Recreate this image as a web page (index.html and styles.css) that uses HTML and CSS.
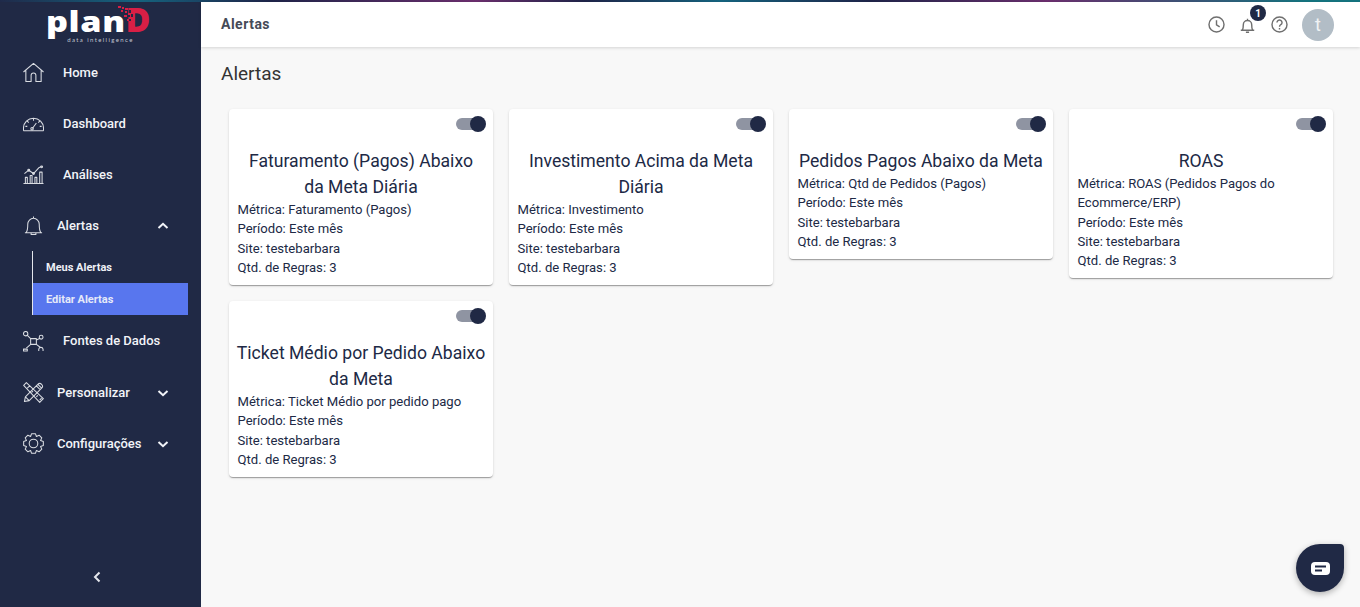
FILE: index.html
```html
<!DOCTYPE html>
<html lang="pt-BR">
<head>
<meta charset="utf-8">
<title>Alertas</title>
<link rel="stylesheet" href="styles.css">
</head>
<body>
<div class="topline"></div>
<div class="app">
  <aside class="sidebar">
    <div class="logo">
      <div class="logo-word"><span class="plan">plan</span><span class="d">D</span>
        <svg class="logo-bits" width="24" height="18" viewBox="0 0 24 18"><g fill="#d81f45"><rect x="0" y="0" width="3" height="2"/><rect x="4" y="1" width="2" height="2"/><rect x="7" y="2" width="3" height="2"/><rect x="3" y="4" width="2" height="2"/><rect x="7" y="5" width="2" height="2"/></g><g fill="#202945"><rect x="11" y="4" width="2" height="3"/><rect x="9" y="9" width="3" height="2"/><rect x="13" y="8" width="2" height="3"/><rect x="11" y="13" width="2" height="2"/></g><g fill="#d81f45"><rect x="10" y="7" width="3" height="2"/><rect x="6" y="9" width="3" height="2"/><rect x="11" y="11" width="2" height="2"/><rect x="9" y="13" width="2" height="2"/></g></svg>
      </div>
      <div class="logo-sub">data intelligence</div>
    </div>
    <nav class="nav">
      <a class="item"><svg class="ico" viewBox="0 0 22 22"><path d="M.5 10.500 11 1.500l10.500 9M3 9v11.500h5.500V14q0-2.500 2.500-2.500t2.500 2.500v6.500H19V9"/></svg><span class="label wide">Home</span></a>
      <a class="item"><svg class="ico" viewBox="0 0 22 22"><path d="M.5 18.500h21M.5 18.500v-2.500a10.500 10.500 0 0 1 21 0v2.500M11 5.500v2.500M4.500 8.500 6 10M17.500 8.500 16 10M2.500 14h2M17.500 14h2M9.800 16.200 14 10.500"/><circle cx="9.500" cy="16.500" r="1.300"/></svg><span class="label wide">Dashboard</span></a>
      <a class="item"><svg class="ico" viewBox="0 0 22 22"><path d="M.5 20.500h21M2.500 20v-6h2v6M7.500 20v-8h2v8M12.500 20v-6h2v6M17.500 20V8.500h2.500V20M1.500 10 6 6.500l5 3.500 5.500-6 3-1.500"/><circle cx="6" cy="6.500" r="1"/><circle cx="11" cy="10" r="1"/><circle cx="19.500" cy="3" r="1"/></svg><span class="label wide">Análises</span></a>
      <a class="item"><svg class="ico" viewBox="0 0 22 22"><path d="M2 18.500h18M3.300 18.500c1.700-2 1.700-5 1.700-9a6 6 0 0 1 12 0c0 4 0 7 1.700 9M8.500 18.500v2h5v-2M11 3.500V1.500"/></svg><span class="label">Alertas</span><svg class="chev" viewBox="0 0 12 8"><path d="M1.500 6 6 1.800 10.500 6"/></svg></a>
      <div class="sub">
        <a class="subitem">Meus Alertas</a>
        <a class="subitem active">Editar Alertas</a>
      </div>
      <a class="item"><svg class="ico" viewBox="0 0 22 22"><path d="M8 8h6v6H8zM8 8 4 4M14 9.500l4-2M8 14l-4.500 4M14 14l4 3"/><circle cx="2.800" cy="2.800" r="2.300"/><circle cx="19" cy="6.500" r="2"/><path d="M.5 21v-2h4v2zM16.500 21v-2a2.300 2.300 0 0 1 4.500 0v2"/></svg><span class="label wide">Fontes de Dados</span></a>
      <a class="item"><svg class="ico" viewBox="0 0 22 22"><path d="M3.500.7.700 3.500 17.500 21.300l3.800-3.800zM4.500 6.500 7 4M9 11l1.500-1.500M14 15.500l1.500-1.500M17.500 19l2-2"/><path d="M2.500 15.500 15.500 2.500l4 4-13 13-5 1zM2.500 15.500l4 4M14 4l4 4M15.500 2.500q2-2 4 0t0 4" /></svg><span class="label">Personalizar</span><svg class="chev" viewBox="0 0 12 8"><path d="M1.500 2 6 6.200 10.500 2"/></svg></a>
      <a class="item"><svg class="ico" viewBox="0 0 22 22"><circle cx="11" cy="11" r="4.500"/><path d="M9 .69h4L14.060 3.610 16.870 2.300 19.700 5.130 18.390 7.940 21.310 9v4L18.390 14.060 19.700 16.870 16.870 19.700 14.060 18.390 13 21.310H9L7.940 18.390 5.130 19.700 2.300 16.870 3.610 14.060.69 13V9L3.610 7.940 2.300 5.130 5.130 2.300 7.940 3.610z"/></svg><span class="label">Configurações</span><svg class="chev" viewBox="0 0 12 8"><path d="M1.500 2 6 6.200 10.500 2"/></svg></a>
    </nav>
    <div class="collapse"><svg class="chev-small" viewBox="0 0 8 12"><path d="M6.500 1.500 2 6l4.500 4.500"/></svg></div>
  </aside>
  <div class="main">
    <header class="topbar">
      <div class="topbar-title">Alertas</div>
      <div class="actions">
        <svg class="act clock" viewBox="0 0 24 24"><circle cx="12" cy="12" r="9.500"/><path d="M12 6.500V12.500l4 2.500"/></svg>
        <div class="bellwrap">
          <svg class="act" viewBox="0 0 24 24"><path d="M3.500 18h17M5.500 18c1-1.500 1.200-3 1.200-7a5.300 5.300 0 0 1 10.600 0c0 4 .2 5.500 1.200 7M12 5.500V3.500M10 20.500h4"/></svg>
          <span class="badge">1</span>
        </div>
        <svg class="act help" viewBox="0 0 24 24"><circle cx="12" cy="12" r="9.500"/><path d="M8.800 9.500a3.200 3.200 0 1 1 4.800 2.800c-1 .6-1.600 1.200-1.600 2.500M12 16.500v1.800"/></svg>
        <div class="avatar">t</div>
      </div>
    </header>
    <main class="content">
      <h1 class="page-title">Alertas</h1>
      <div class="cards">
        <section class="card">
          <div class="card-top"><span class="toggle"><span class="knob"></span></span></div>
          <h2 class="card-title">Faturamento (Pagos) Abaixo<br>da Meta Diária</h2>
          <p class="line">Métrica: Faturamento (Pagos)</p>
          <p class="line">Período: Este mês</p>
          <p class="line">Site: testebarbara</p>
          <p class="line">Qtd. de Regras: 3</p>
        </section>
        <section class="card">
          <div class="card-top"><span class="toggle"><span class="knob"></span></span></div>
          <h2 class="card-title">Investimento Acima da Meta Diária</h2>
          <p class="line">Métrica: Investimento</p>
          <p class="line">Período: Este mês</p>
          <p class="line">Site: testebarbara</p>
          <p class="line">Qtd. de Regras: 3</p>
        </section>
        <section class="card">
          <div class="card-top"><span class="toggle"><span class="knob"></span></span></div>
          <h2 class="card-title">Pedidos Pagos Abaixo da Meta</h2>
          <p class="line">Métrica: Qtd de Pedidos (Pagos)</p>
          <p class="line">Período: Este mês</p>
          <p class="line">Site: testebarbara</p>
          <p class="line">Qtd. de Regras: 3</p>
        </section>
        <section class="card">
          <div class="card-top"><span class="toggle"><span class="knob"></span></span></div>
          <h2 class="card-title">ROAS</h2>
          <p class="line">Métrica: ROAS (Pedidos Pagos do Ecommerce/ERP)</p>
          <p class="line">Período: Este mês</p>
          <p class="line">Site: testebarbara</p>
          <p class="line">Qtd. de Regras: 3</p>
        </section>
        <section class="card">
          <div class="card-top"><span class="toggle"><span class="knob"></span></span></div>
          <h2 class="card-title">Ticket Médio por Pedido Abaixo da Meta</h2>
          <p class="line">Métrica: Ticket Médio por pedido pago</p>
          <p class="line">Período: Este mês</p>
          <p class="line">Site: testebarbara</p>
          <p class="line">Qtd. de Regras: 3</p>
        </section>
      </div>
    </main>
  </div>
</div>
<div class="chat"><svg width="19" height="13" viewBox="0 0 19 13"><rect width="19" height="13" rx="4" fill="#fff"/><path d="M4 4.500h11M4 8.500h7" stroke="#202945" stroke-width="1.800"/></svg></div>
</body>
</html>
```
FILE: styles.css
```css
* { box-sizing: border-box; }
html, body { margin: 0; height: 100%; overflow: hidden; }
body { font-family: Roboto, "Liberation Sans", sans-serif; background: #f8f8f8; color: #202945; display: flex; flex-direction: column; }
.topline { height: 2px; flex: none; background: linear-gradient(90deg, #1f2a4a 0%, #15647f 10%, #1f2449 20%, #6b2f6e 35%, #1f2449 43%, #15647f 53%, #1f2449 64%, #6b2f6e 77%, #15747f 96%, #15747f 100%); }
.app { flex: 1; display: flex; min-height: 0; }
.sidebar { width: 201px; flex: none; background: #202945; display: flex; flex-direction: column; }
.logo { height: 45px; flex: none; display: flex; flex-direction: column; align-items: center; }
.logo-word { position: relative; display: flex; align-items: baseline; width: 101px; height: 34px; line-height: 34px; font-family: "Open Sans", sans-serif; font-weight: 800; font-size: 29px; }
.plan { display: inline-block; flex: none; color: #fff; letter-spacing: .5px; transform: scaleX(1.18); transform-origin: left; margin: 0 12px 0 -4px; }
.d { color: #d81f45; font-weight: 800; font-size: 34px; }
.logo-bits { position: absolute; left: 68px; top: 4px; }
.logo-sub { font-family: Lato, sans-serif; font-size: 6px; line-height: 7px; letter-spacing: 1.4px; color: #c4c7d0; }
.nav { display: flex; flex-direction: column; }
.item { height: 51px; display: flex; align-items: center; padding-left: 23px; color: #f2f4f8; font-size: 13px; font-weight: 500; }
.sub + .item { height: 52px; }
.ico { width: 21px; height: 21px; flex: none; fill: none; stroke: #d9dce2; stroke-width: 1.1; stroke-linejoin: round; }
.label { margin-left: 13px; flex: 1; position: relative; top: -.5px; }
.label.wide { margin-left: 19px; }
.chev { width: 12px; height: 8px; flex: none; margin-right: 32px; fill: none; stroke: #f2f4f8; stroke-width: 2; }
.sub { margin-left: 32px; width: 156px; border-left: 1px solid #e4e6ec; display: flex; flex-direction: column; }
.subitem { height: 32px; display: flex; align-items: center; padding-left: 13px; font-size: 11px; font-weight: 700; color: #eef0f5; }
.subitem.active { background: #5876ee; color: #e6e9f8; }
.collapse { margin-top: auto; height: 60px; display: flex; align-items: center; justify-content: center; padding-right: 7px; }
.chev-small { width: 8px; height: 12px; fill: none; stroke: #e4e6ec; stroke-width: 2; }
.main { flex: 1; min-width: 0; display: flex; flex-direction: column; }
.topbar { height: 45px; flex: none; background: #fff; box-shadow: 0 1px 3px rgba(0,0,0,.15); display: flex; align-items: center; padding: 0 26px 0 20px; }
.topbar-title { font-size: 14px; font-weight: 700; color: #454a57; flex: 1; letter-spacing: .5px; position: relative; top: -1px; }
.actions { display: flex; align-items: center; }
.act { width: 19px; height: 19px; fill: none; stroke: #6f6f6f; stroke-width: 1.800; display: block; }
.bellwrap { position: relative; margin-left: 12px; margin-top: 2px; }
.help { margin-left: 13px; }
.badge { position: absolute; left: 12px; top: -11px; width: 16px; height: 16px; border-radius: 50%; background: #202945; color: #fff; font-size: 10px; font-weight: 700; display: flex; align-items: center; justify-content: center; }
.avatar { width: 32px; height: 32px; margin-left: 13px; border-radius: 50%; background: #b2bdc6; color: #f0f2f4; font-size: 18px; display: flex; align-items: center; justify-content: center; }
.content { flex: 1; padding: 14px 27px 0 20px; }
.page-title { margin: 0; font-size: 19px; font-weight: 400; line-height: 25px; color: #333; }
.cards { display: grid; grid-template-columns: repeat(4, 264px); gap: 16px; align-items: start; margin: 23px 0 0 8px; }
.card { background: #fff; border-radius: 4px; box-shadow: 0 2px 1px -1px rgba(0,0,0,.2), 0 1px 1px 0 rgba(0,0,0,.14), 0 1px 3px 0 rgba(0,0,0,.12); padding: 0 8px 8px; }
.card-top { height: 39px; display: flex; justify-content: flex-end; padding-top: 6px; }
.toggle { position: relative; display: block; width: 29px; height: 12px; margin-top: 3px; border-radius: 6px; background: #8f94a2; }
.knob { position: absolute; right: -1px; top: -2px; width: 16px; height: 16px; border-radius: 50%; background: #202945; }
.card-title { margin: 0 -4px; font-size: 17.6px; font-weight: 400; line-height: 26px; text-align: center; color: #202945; }
.line { margin: 0; font-size: 13.1px; line-height: 19.25px; color: #202945; padding-left: .5px; }
.chat { position: fixed; left: 1296px; top: 544px; width: 48px; height: 48px; border-radius: 50% 4px 50% 50%; background: #202945; box-shadow: 0 2px 6px rgba(0,0,0,.3); display: flex; align-items: center; justify-content: center; }
```
